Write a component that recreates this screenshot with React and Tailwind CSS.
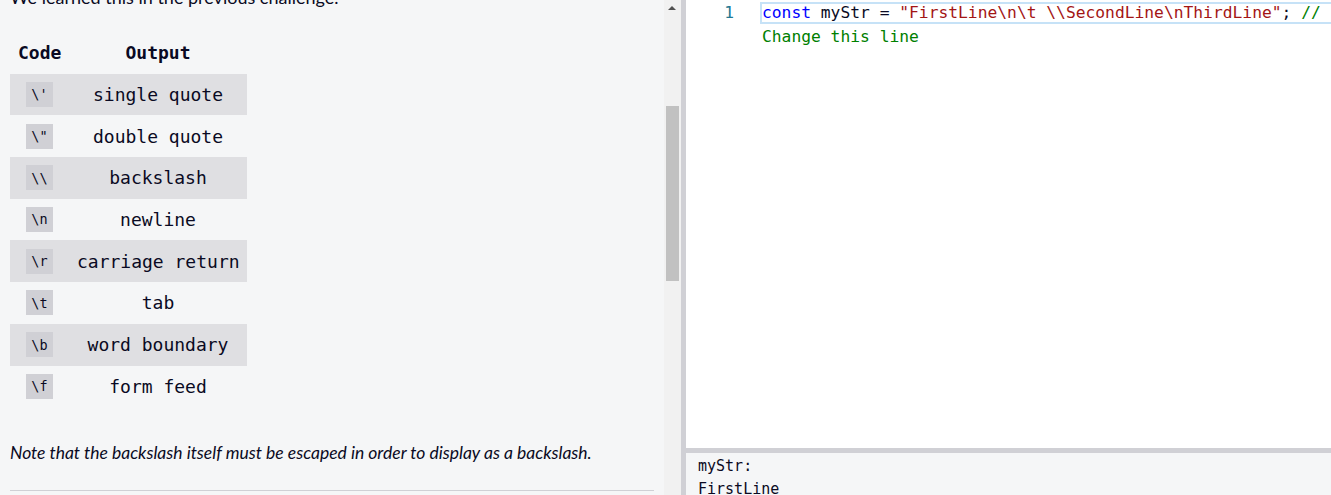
import React from "react";

const rows = [
  ["\\'", "single quote"],
  ['\\"', "double quote"],
  ["\\\\", "backslash"],
  ["\\n", "newline"],
  ["\\r", "carriage return"],
  ["\\t", "tab"],
  ["\\b", "word boundary"],
  ["\\f", "form feed"],
];

const mono = "font-['DejaVu_Sans_Mono',monospace]";

const App = () => {
  return (
    <div className="flex h-[495px] w-[1331px] overflow-hidden bg-white text-[#0a0a23]">
      {/* left: challenge text */}
      <div className="w-[664px] shrink-0 overflow-hidden bg-[#f5f6f7] px-[10px]">
        <p className="mt-[-16px] font-['Lato',sans-serif] text-[18px] leading-[26px]">
          We learned this in the previous challenge.
        </p>

        <div className={`mt-[22px] w-[237px] ${mono} text-[18px]`}>
          <div className="flex h-[41.7px] items-center font-bold">
            <div className="w-[59px] px-2 text-center">Code</div>
            <div className="w-[178px] px-2 text-center">Output</div>
          </div>
          {rows.map(([code, out], i) => (
            <div
              key={code}
              className={`flex h-[41.7px] items-center ${i % 2 === 0 ? "bg-[#dfdfe2]" : ""}`}
            >
              <div className="flex w-[59px] justify-center px-2">
                <span className="flex h-[25px] w-[27px] items-center justify-center bg-[#d0d0d5] text-[13.5px]">
                  {code}
                </span>
              </div>
              <div className="w-[178px] whitespace-nowrap px-2 text-center">{out}</div>
            </div>
          ))}
        </div>

        <p className="mt-[33px] font-['Lato',sans-serif] text-[17.5px] italic leading-[26px]">
          Note that the backslash itself must be escaped in order to display as a backslash.
        </p>
        <div className="mt-[24px] h-px bg-[#d0d0d5]" />
      </div>

      {/* scrollbar */}
      <div className="relative w-[17px] shrink-0 bg-[#f1f1f1]">
        <div className="absolute left-[4px] top-[6px] h-0 w-0 border-x-[4px] border-b-[4px] border-x-transparent border-b-[#505050]" />
        <div className="absolute left-[2px] top-[106px] h-[175px] w-[13px] bg-[#c1c1c1]" />
      </div>
      <div className="w-[5px] shrink-0 bg-[#d0d0d5]" />

      {/* right: editor + console */}
      <div className="flex min-w-0 flex-1 flex-col">
        <div className={`h-[448px] shrink-0 bg-white pt-[2px] ${mono} text-[16.3px]`}>
          <div className="flex h-[22px] items-center">
            <div className="w-[54px] pr-[6px] text-right text-[#237893]">1</div>
            <div className="ml-[20px] flex h-[22px] flex-1 items-center whitespace-nowrap border-2 border-r-0 border-[#c6e2f7]">
              <span className="text-[#0000ff]">const</span>
              <span className="whitespace-pre"> myStr = </span>
              <span className="text-[#a31515]">"FirstLine\n\t \\SecondLine\nThirdLine"</span>
              <span>;</span>
              <span className="whitespace-pre text-[#008000]"> //</span>
            </div>
          </div>
          <div className="flex h-[26px] items-center">
            <div className="ml-[76px] text-[#008000]">Change this line</div>
          </div>
        </div>
        <div className="h-[5px] shrink-0 bg-[#d0d0d5]" />
        <div className={`flex-1 bg-[#f5f6f7] px-[12px] pt-[2px] ${mono} text-[15px] leading-[23px]`}>
          <div>myStr:</div>
          <div>FirstLine</div>
        </div>
      </div>
    </div>
  );
};

export default App;
